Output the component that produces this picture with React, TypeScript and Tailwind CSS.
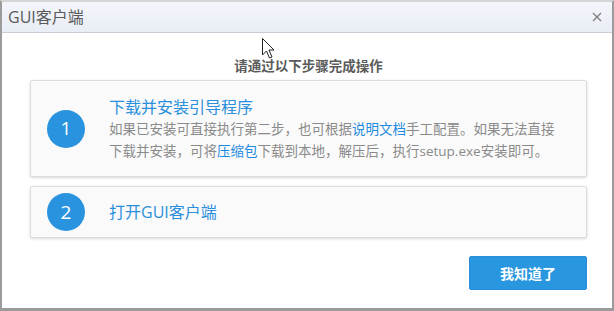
export default function App() {
  return (
    <div
      className="relative w-[614px] h-[311px] bg-white border-x-[2px] border-b-[3px] border-t-[2px] border-[#9b9b9b] border-t-[#d4d4d4] flex flex-col overflow-hidden"
      style={{ fontFamily: '"Open Sans", "Noto Sans CJK SC", sans-serif' }}
    >
      <div className="h-[31px] shrink-0 flex items-center justify-between pl-[6px] pr-[10px] bg-gradient-to-b from-[#f3f5fa] to-[#e9edf5] border-b border-[#c9cdd6]">
        <span className="text-[16px] leading-[20px] text-[#5a5a5a]">GUI客户端</span>
        <svg width="10" height="10" viewBox="0 0 10 10">
          <path d="M1 1 L9 9 M9 1 L1 9" stroke="#808080" strokeWidth="1.4" />
        </svg>
      </div>

      <div className="flex flex-col pl-[28px] pr-[25px]">
        <div className="mt-[23px] h-[20px] text-center text-[13.5px] leading-[20px] font-semibold text-[#5c5c5c]">
          请通过以下步骤完成操作
        </div>

        <div className="mt-[4px] h-[97px] flex items-center rounded-[2px] border border-[#dcdcdc] bg-[#fafafa] shadow-[0_1px_3px_rgba(0,0,0,0.15)] pl-[16px]">
          <div className="w-[38px] h-[38px] shrink-0 rounded-full bg-[#2993df] flex items-center justify-center text-white text-[19px] leading-none">
            1
          </div>
          <div className="ml-[24px] flex flex-col">
            <div className="text-[16px] leading-[22px] text-[#2a8fdc]">下载并安装引导程序</div>
            <div className="text-[13.5px] leading-[22px] text-[#8a8a8a] whitespace-nowrap">
              如果已安装可直接执行第二步，也可根据<span className="text-[#1f8be0]">说明文档</span>手工配置。如果无法直接
              <br />
              下载并安装，可将<span className="text-[#1f8be0]">压缩包</span>下载到本地，解压后，执行setup.exe安装即可。
            </div>
          </div>
        </div>

        <div className="mt-[9px] h-[52px] flex items-center rounded-[2px] border border-[#dcdcdc] bg-[#fafafa] shadow-[0_1px_3px_rgba(0,0,0,0.15)] pl-[16px]">
          <div className="w-[38px] h-[38px] shrink-0 rounded-full bg-[#2993df] flex items-center justify-center text-white text-[19px] leading-none">
            2
          </div>
          <div className="ml-[24px] text-[16px] leading-[22px] text-[#2a8fdc]">打开GUI客户端</div>
        </div>

        <div className="mt-[18px] flex justify-end">
          <button className="w-[118px] h-[34px] rounded-[2px] bg-[#2997e0] text-white text-[14px] font-bold border border-[#2a8fd6]">
            我知道了
          </button>
        </div>
      </div>

      <svg
        className="absolute left-[259px] top-[35px]"
        width="15"
        height="23"
        viewBox="0 0 15 23"
      >
        <path
          d="M1.5 1.5 L1.5 18 L5.5 14 L8.5 21 L11 20 L8 13 L13 13 Z"
          fill="#fff"
          stroke="#222"
          strokeWidth="1"
          strokeLinejoin="round"
        />
      </svg>
    </div>
  );
}
